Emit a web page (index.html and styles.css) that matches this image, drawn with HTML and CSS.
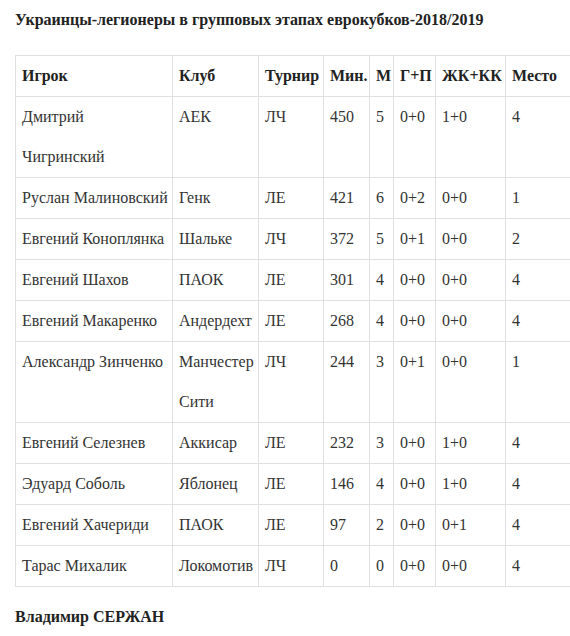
FILE: index.html
```html
<!DOCTYPE html>
<html lang="ru">
<head>
<meta charset="utf-8">
<link rel="stylesheet" href="styles.css">
</head>
<body>
<div class="page">
  <p class="title">Украинцы-легионеры в групповых этапах еврокубков-2018/2019</p>
  <table class="stats">
    <colgroup>
      <col class="c-player"><col class="c-club"><col class="c-tour"><col class="c-min"><col class="c-m"><col class="c-gp"><col class="c-cards"><col class="c-place">
    </colgroup>
    <thead>
      <tr><th>Игрок</th><th>Клуб</th><th>Турнир</th><th>Мин.</th><th>М</th><th>Г+П</th><th>ЖК+КК</th><th>Место</th></tr>
    </thead>
    <tbody>
      <tr><td>Дмитрий<br>Чигринский</td><td>АЕК</td><td>ЛЧ</td><td>450</td><td>5</td><td>0+0</td><td>1+0</td><td>4</td></tr>
      <tr><td>Руслан Малиновский</td><td>Генк</td><td>ЛЕ</td><td>421</td><td>6</td><td>0+2</td><td>0+0</td><td>1</td></tr>
      <tr><td>Евгений Коноплянка</td><td>Шальке</td><td>ЛЧ</td><td>372</td><td>5</td><td>0+1</td><td>0+0</td><td>2</td></tr>
      <tr><td>Евгений Шахов</td><td>ПАОК</td><td>ЛЕ</td><td>301</td><td>4</td><td>0+0</td><td>0+0</td><td>4</td></tr>
      <tr><td>Евгений Макаренко</td><td>Андердехт</td><td>ЛЕ</td><td>268</td><td>4</td><td>0+0</td><td>0+0</td><td>4</td></tr>
      <tr><td>Александр Зинченко</td><td>Манчестер<br>Сити</td><td>ЛЧ</td><td>244</td><td>3</td><td>0+1</td><td>0+0</td><td>1</td></tr>
      <tr><td>Евгений Селезнев</td><td>Аккисар</td><td>ЛЕ</td><td>232</td><td>3</td><td>0+0</td><td>1+0</td><td>4</td></tr>
      <tr><td>Эдуард Соболь</td><td>Яблонец</td><td>ЛЕ</td><td>146</td><td>4</td><td>0+0</td><td>1+0</td><td>4</td></tr>
      <tr><td>Евгений Хачериди</td><td>ПАОК</td><td>ЛЕ</td><td>97</td><td>2</td><td>0+0</td><td>0+1</td><td>4</td></tr>
      <tr><td>Тарас Михалик</td><td>Локомотив</td><td>ЛЧ</td><td>0</td><td>0</td><td>0+0</td><td>0+0</td><td>4</td></tr>
    </tbody>
  </table>
  <p class="author">Владимир СЕРЖАН</p>
</div>
</body>
</html>
```
FILE: styles.css
```css
html, body {
  margin: 0;
  padding: 0;
  background: #ffffff;
}
body {
  font-family: "Liberation Serif", "Times New Roman", serif;
  font-size: 16px;
  color: #333333;
}
.page {
  width: 570px;
  overflow: hidden;
  padding: 8px 0 0 15px;
  box-sizing: border-box;
}
.title {
  margin: 0 0 23px 0;
  font-weight: bold;
  font-size: 16px;
  line-height: 24px;
  color: #222222;
}
.stats {
  border-collapse: collapse;
  table-layout: fixed;
  width: 600px;
}
.c-player { width: 157px; }
.c-club { width: 86px; }
.c-tour { width: 65px; }
.c-min { width: 46px; }
.c-m { width: 24px; }
.c-gp { width: 42px; }
.c-cards { width: 70px; }
.c-place { width: 110px; }
.stats th,
.stats td {
  border: 1px solid #e0e0e0;
  padding: 0 6px;
  line-height: 40px;
  text-align: left;
  vertical-align: top;
  white-space: nowrap;
}
.stats th {
  font-weight: bold;
  color: #222222;
}
.author {
  margin: 18px 0 0 0;
  font-weight: bold;
  font-size: 16px;
  line-height: 24px;
  color: #222222;
}
```
